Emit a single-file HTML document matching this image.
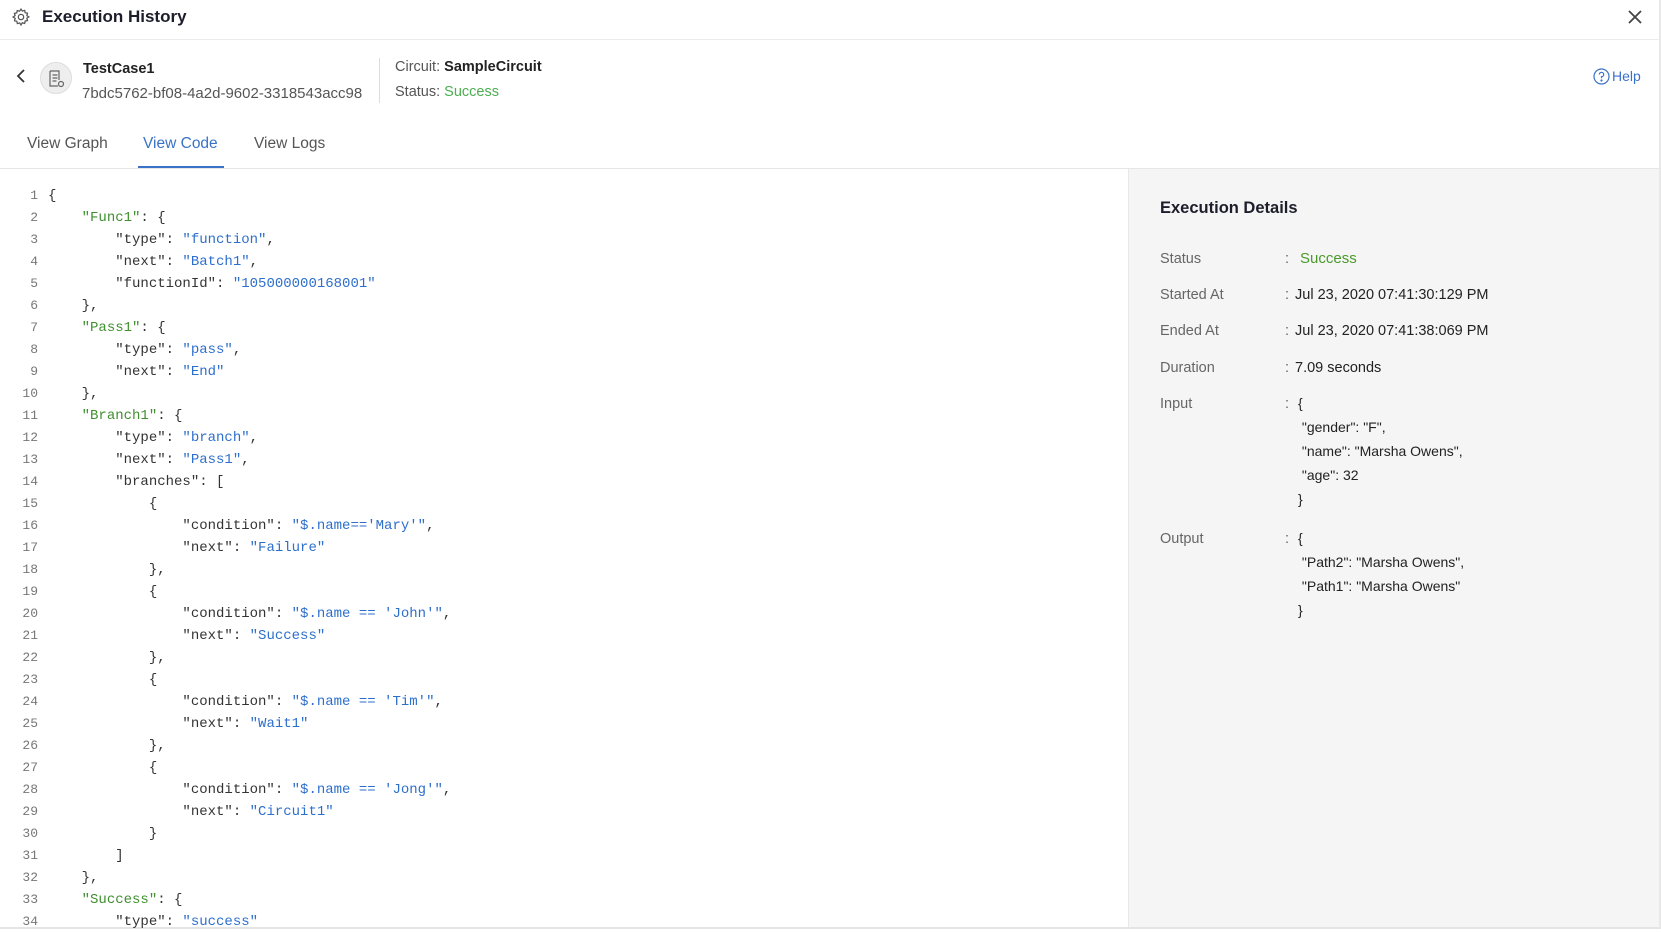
<!DOCTYPE html>
<html><head><meta charset="utf-8"><style>
*{margin:0;padding:0;box-sizing:border-box}
body{width:1661px;height:931px;overflow:hidden;background:#fff;font-family:"Liberation Sans",sans-serif;color:#222;position:relative}
.a{position:absolute;white-space:nowrap}
.code{position:absolute;left:0;top:185px;font-family:"Liberation Mono",monospace;font-size:14px;line-height:22px;color:#333}
.ln{display:inline-block;width:38px;text-align:right;color:#777;margin-right:10px;font-size:13px}
.k{color:#3f8f2f}.s{color:#2d6fcc}
.lbl{position:absolute;left:1160px;color:#666;font-size:14.5px}
.col{position:absolute;left:1285px;color:#666;font-size:14.5px}
.val{position:absolute;left:1295px;color:#222;font-size:14.5px;white-space:nowrap}
</style></head><body>
<svg class="a" style="left:11px;top:7px" width="20" height="20" viewBox="0 0 24 24" fill="none" stroke="#555" stroke-width="1.5"><circle cx="12" cy="12" r="3.2"/><path d="M12 2.5l1.6 2.4 2.8-.8.6 2.8 2.8.6-.8 2.8 2.4 1.6-2.4 1.6.8 2.8-2.8.6-.6 2.8-2.8-.8L12 21.5l-1.6-2.4-2.8.8-.6-2.8-2.8-.6.8-2.8L2.5 12l2.4-1.6-.8-2.8 2.8-.6.6-2.8 2.8.8z"/></svg>
<div class="a" style="left:42px;top:7px;font-size:17px;font-weight:bold;color:#1d1d2b">Execution History</div>
<svg class="a" style="left:1628px;top:10px" width="14" height="14" viewBox="0 0 14 14" stroke="#444" stroke-width="1.8"><path d="M1 1L13 13M13 1L1 13"/></svg>
<div class="a" style="left:0;top:39px;width:1661px;height:1px;background:#ececec"></div>

<svg class="a" style="left:16px;top:69px" width="10" height="14" viewBox="0 0 10 14" fill="none" stroke="#333" stroke-width="1.8"><path d="M8 1L2 7l6 6"/></svg>
<div class="a" style="left:40px;top:62px;width:32px;height:32px;border-radius:50%;background:#eee;border:1px solid #ddd"></div>
<svg class="a" style="left:46px;top:69px" width="20" height="20" viewBox="0 0 20 20" fill="none" stroke="#666" stroke-width="1.2"><path d="M4 2h9v9M4 2v15h8"/><path d="M6.5 6h5M6.5 9h5M6.5 12h4"/><circle cx="15" cy="15" r="2.5"/></svg>
<div class="a" style="left:83px;top:61px;font-size:14.5px;font-weight:bold">TestCase1</div>
<div class="a" style="left:82px;top:85px;font-size:15px;color:#555">7bdc5762-bf08-4a2d-9602-3318543acc98</div>
<div class="a" style="left:379px;top:58px;width:1px;height:45px;background:#ddd"></div>
<div class="a" style="left:395px;top:59px;font-size:14.5px;color:#555">Circuit: <b style="color:#222">SampleCircuit</b></div>
<div class="a" style="left:395px;top:84px;font-size:14.5px;color:#555">Status: <span style="color:#4caf50">Success</span></div>
<svg class="a" style="left:1593px;top:68px" width="17" height="17" viewBox="0 0 17 17" fill="none" stroke="#3a72c8" stroke-width="1.2"><circle cx="8.5" cy="8.5" r="7.5"/><path d="M6.3 6.5a2.2 2.2 0 1 1 2.2 2.2v1.6"/><circle cx="8.5" cy="12.5" r=".5" fill="#3a72c8"/></svg>
<div class="a" style="left:1612px;top:68px;font-size:14px;color:#3a72c8">Help</div>

<div class="a" style="left:27px;top:135px;font-size:15.5px;color:#555">View Graph</div>
<div class="a" style="left:143px;top:135px;font-size:15.5px;color:#3a72c8">View Code</div>
<div class="a" style="left:254px;top:135px;font-size:15.5px;color:#555">View Logs</div>
<div class="a" style="left:0;top:168px;width:1661px;height:1px;background:#e6e6e6"></div>
<div class="a" style="left:138px;top:166px;width:86px;height:2px;background:#3a72c8"></div>

<div class="a" style="left:1128px;top:169px;width:533px;height:759px;background:#f5f5f5;border-left:1px solid #e8e8e8"></div>
<div class="a" style="left:0;top:927px;width:1661px;height:2px;background:#e4e4e4"></div>
<div class="a" style="left:1659px;top:0;width:2px;height:931px;background:#e8e8e8"></div>

<div class="code"><pre style="font:inherit">
<span class="ln">1</span>{
<span class="ln">2</span>    <span class="k">"Func1"</span>: {
<span class="ln">3</span>        "type": <span class="s">"function"</span>,
<span class="ln">4</span>        "next": <span class="s">"Batch1"</span>,
<span class="ln">5</span>        "functionId": <span class="s">"105000000168001"</span>
<span class="ln">6</span>    },
<span class="ln">7</span>    <span class="k">"Pass1"</span>: {
<span class="ln">8</span>        "type": <span class="s">"pass"</span>,
<span class="ln">9</span>        "next": <span class="s">"End"</span>
<span class="ln">10</span>    },
<span class="ln">11</span>    <span class="k">"Branch1"</span>: {
<span class="ln">12</span>        "type": <span class="s">"branch"</span>,
<span class="ln">13</span>        "next": <span class="s">"Pass1"</span>,
<span class="ln">14</span>        "branches": [
<span class="ln">15</span>            {
<span class="ln">16</span>                "condition": <span class="s">"$.name=='Mary'"</span>,
<span class="ln">17</span>                "next": <span class="s">"Failure"</span>
<span class="ln">18</span>            },
<span class="ln">19</span>            {
<span class="ln">20</span>                "condition": <span class="s">"$.name == 'John'"</span>,
<span class="ln">21</span>                "next": <span class="s">"Success"</span>
<span class="ln">22</span>            },
<span class="ln">23</span>            {
<span class="ln">24</span>                "condition": <span class="s">"$.name == 'Tim'"</span>,
<span class="ln">25</span>                "next": <span class="s">"Wait1"</span>
<span class="ln">26</span>            },
<span class="ln">27</span>            {
<span class="ln">28</span>                "condition": <span class="s">"$.name == 'Jong'"</span>,
<span class="ln">29</span>                "next": <span class="s">"Circuit1"</span>
<span class="ln">30</span>            }
<span class="ln">31</span>        ]
<span class="ln">32</span>    },
<span class="ln">33</span>    <span class="k">"Success"</span>: {
<span class="ln">34</span>        "type": <span class="s">"success"</span>
</pre></div>
<div class="a" style="left:0;top:929px;width:1661px;height:2px;background:#fff"></div>

<div class="a" style="left:1160px;top:199px;font-size:16.5px;font-weight:bold;color:#1d1d2b">Execution Details</div>
<div class="lbl" style="top:251px">Status</div><div class="col" style="top:251px">:</div><div class="val" style="left:1300px;top:250px;color:#4a9a2a;font-size:15px">Success</div>
<div class="lbl" style="top:287px">Started At</div><div class="col" style="top:287px">:</div><div class="val" style="top:287px">Jul 23, 2020 07:41:30:129 PM</div>
<div class="lbl" style="top:323px">Ended At</div><div class="col" style="top:323px">:</div><div class="val" style="top:323px">Jul 23, 2020 07:41:38:069 PM</div>
<div class="lbl" style="top:360px">Duration</div><div class="col" style="top:360px">:</div><div class="val" style="top:360px">7.09 seconds</div>
<div class="lbl" style="top:396px">Input</div><div class="col" style="top:396px">:</div><div class="val" style="left:1298px;top:391px;font-size:14px;line-height:24px">{<br>&nbsp;"gender": "F",<br>&nbsp;"name": "Marsha Owens",<br>&nbsp;"age": 32<br>}</div>
<div class="lbl" style="top:531px">Output</div><div class="col" style="top:531px">:</div><div class="val" style="left:1298px;top:526px;font-size:14px;line-height:24px">{<br>&nbsp;"Path2": "Marsha Owens",<br>&nbsp;"Path1": "Marsha Owens"<br>}</div>
</body></html>
